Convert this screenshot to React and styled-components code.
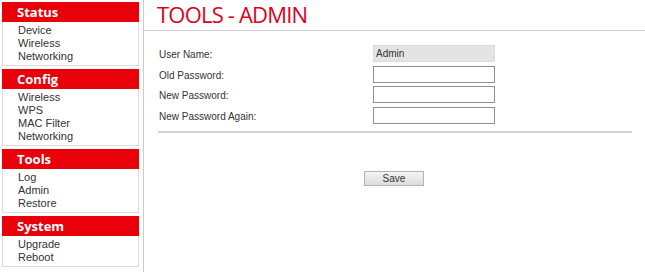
import styled, { createGlobalStyle } from 'styled-components';

const GlobalStyle = createGlobalStyle`
  html, body {
    margin: 0;
    padding: 0;
    background: #fff;
    font-family: Arial, "Liberation Sans", sans-serif;
  }
`;

const menu = [
  { title: 'Status', items: ['Device', 'Wireless', 'Networking'] },
  { title: 'Config', items: ['Wireless', 'WPS', 'MAC Filter', 'Networking'] },
  { title: 'Tools', items: ['Log', 'Admin', 'Restore'] },
  { title: 'System', items: ['Upgrade', 'Reboot'] },
];

const fields = [
  { label: 'User Name:', value: 'Admin', disabled: true },
  { label: 'Old Password:' },
  { label: 'New Password:' },
  { label: 'New Password Again:' },
];

const Page = styled.div`
  display: flex;
  width: 645px;
  height: 279px;
`;

const Sidebar = styled.div`
  width: 137px;
  padding: 2px 0 0 2px;
  display: flex;
  flex-direction: column;
  gap: 3px;
`;

const MenuBox = styled.div`
  border: 1px solid #dcdcdc;
  border-top: none;
  padding: 2px 0 2px;
`;

const MenuHeader = styled.div`
  height: 20px;
  background: #e8000b;
  color: #fff;
  font-family: "Open Sans", sans-serif;
  font-weight: 700;
  font-size: 13px;
  line-height: 20px;
  padding-left: 15px;
  margin: -2px -1px 2px;
`;

const MenuItem = styled.div`
  font-size: 11px;
  line-height: 13px;
  color: #333;
  padding-left: 15px;
`;

const Main = styled.div`
  flex: 1;
  margin-left: 4px;
  border-left: 1px solid #ccc;
  height: 272px;
`;

const TitleBar = styled.div`
  height: 30px;
  border-bottom: 1px solid #d0d0d0;
  padding-left: 13px;
`;

const Title = styled.h1`
  margin: 0;
  font-family: "Open Sans", sans-serif;
  font-weight: 400;
  font-size: 22px;
  letter-spacing: -0.8px;
  line-height: 29px;
  color: #e0001b;
`;

const Form = styled.div`
  padding: 14px 13px 0 14px;
`;

const Row = styled.div`
  display: flex;
  align-items: center;
  height: 17px;
  margin-bottom: 3.5px;
`;

const Label = styled.div`
  width: 214px;
  font-size: 10px;
  color: #333;
  padding-left: 1px;
  padding-top: 2px;
`;

const Input = styled.input`
  box-sizing: border-box;
  width: 122px;
  height: 17px;
  margin: 0;
  padding: 0 2px;
  font-family: Arial, "Liberation Sans", sans-serif;
  font-size: 10px;
  color: #333;
  border: 1px solid ${(p) => (p.disabled ? '#dcdcdc' : '#8f8f8f')};
  background: ${(p) => (p.disabled ? '#e4e4e4' : '#fff')};
  outline: none;
`;

const Rule = styled.div`
  height: 2px;
  background: #d4d4d4;
  margin-top: 7px;
`;

const Actions = styled.div`
  display: flex;
  justify-content: center;
  padding-top: 38px;
  padding-right: 2px;
`;

const Button = styled.button`
  width: 60px;
  height: 15px;
  padding: 0;
  font-family: Arial, "Liberation Sans", sans-serif;
  font-size: 10px;
  color: #333;
  border: 1px solid #b4b4b4;
  background: linear-gradient(#f4f4f4, #dcdcdc);
`;

export default function App() {
  return (
    <>
      <GlobalStyle />
      <Page>
        <Sidebar>
          {menu.map((group) => (
            <MenuBox key={group.title}>
              <MenuHeader>{group.title}</MenuHeader>
              {group.items.map((item) => (
                <MenuItem key={item}>{item}</MenuItem>
              ))}
            </MenuBox>
          ))}
        </Sidebar>
        <Main>
          <TitleBar>
            <Title>TOOLS - ADMIN</Title>
          </TitleBar>
          <Form>
            {fields.map((f) => (
              <Row key={f.label}>
                <Label>{f.label}</Label>
                <Input
                  type={f.disabled ? 'text' : 'password'}
                  defaultValue={f.value || ''}
                  disabled={f.disabled}
                />
              </Row>
            ))}
            <Rule />
            <Actions>
              <Button>Save</Button>
            </Actions>
          </Form>
        </Main>
      </Page>
    </>
  );
}
